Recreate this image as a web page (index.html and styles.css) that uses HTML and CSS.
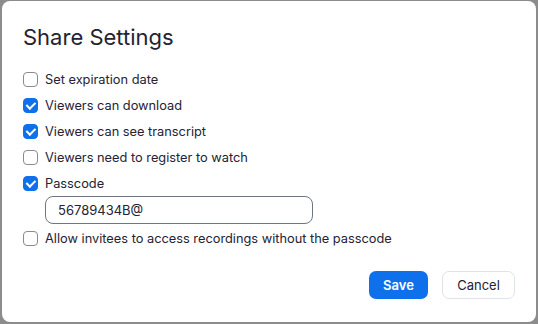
FILE: index.html
```html
<!DOCTYPE html>
<html lang="en">
<head>
    <meta charset="UTF-8">
    <meta name="viewport" content="width=device-width, initial-scale=1.0">
    <title>Share Settings</title>
    <link rel="stylesheet" href="styles.css">
</head>
<body>

<div class="dialog">
    <h2>Share Settings</h2>

    <div class="options">
        <label class="option">
            <input type="checkbox">
            <span>Set expiration date</span>
        </label>
        <label class="option">
            <input type="checkbox" checked>
            <span>Viewers can download</span>
        </label>
        <label class="option">
            <input type="checkbox" checked>
            <span>Viewers can see transcript</span>
        </label>
        <label class="option">
            <input type="checkbox">
            <span>Viewers need to register to watch</span>
        </label>
        <label class="option">
            <input type="checkbox" checked>
            <span>Passcode</span>
        </label>
        <div class="passcode">
            <input type="text" value="56789434B@">
        </div>
        <label class="option">
            <input type="checkbox">
            <span>Allow invitees to access recordings without the passcode</span>
        </label>
    </div>

    <div class="actions">
        <button type="button" class="btn-save">Save</button>
        <button type="button" class="btn-cancel">Cancel</button>
    </div>
</div>

</body>
</html>
```

FILE: styles.css
```css
html, body {
    height: 100%;
}
body {
    margin: 0;
    background-color: #8c8c8c;
    font-family: Inter, "Noto Sans", Arial, sans-serif;
    color: #232333;
    overflow: hidden;
}
.dialog {
    box-sizing: border-box;
    width: 534px;
    height: 321px;
    margin: 1px 0 0 2px;
    background-color: #fff;
    border-radius: 8px;
    padding: 22px 21px 0 21px;
    display: flex;
    flex-direction: column;
}
h2 {
    margin: 0 0 15px 0;
    font-size: 22px;
    font-weight: 400;
    line-height: 28px;
}
.options {
    display: flex;
    flex-direction: column;
}
.option {
    display: flex;
    align-items: center;
    height: 26px;
    font-size: 12.8px;
    cursor: pointer;
}
.option input[type="checkbox"] {
    appearance: none;
    -webkit-appearance: none;
    box-sizing: border-box;
    width: 15px;
    height: 15px;
    margin: 0 7px 0 0;
    border: 1px solid #8a8a93;
    border-radius: 4px;
    background-color: #fff;
    position: relative;
}
.option input[type="checkbox"]:checked {
    border-color: #0e71eb;
    background-color: #0e71eb;
}
.option input[type="checkbox"]:checked::after {
    content: "";
    position: absolute;
    left: 4px;
    top: 1.5px;
    width: 3.5px;
    height: 7px;
    border: solid #fff;
    border-width: 0 2px 2px 0;
    transform: rotate(45deg);
}
.passcode {
    padding: 0 0 1px 22px;
}
.passcode input {
    box-sizing: border-box;
    width: 268px;
    height: 28px;
    padding: 0 12px;
    border: 1px solid #6e7680;
    border-radius: 8px;
    font-family: inherit;
    font-size: 13px;
    color: #232333;
}
.actions {
    display: flex;
    justify-content: flex-end;
    gap: 14px;
    margin-top: 20px;
}
button {
    height: 28px;
    border-radius: 7px;
    font-family: inherit;
    font-size: 13px;
    cursor: pointer;
}
.btn-save {
    width: 59px;
    background-color: #0e71eb;
    color: #fff;
    border: none;
    font-weight: 600;
}
.btn-cancel {
    width: 73px;
    background-color: #fff;
    color: #232333;
    border: 1px solid #dfe3e8;
}
```
